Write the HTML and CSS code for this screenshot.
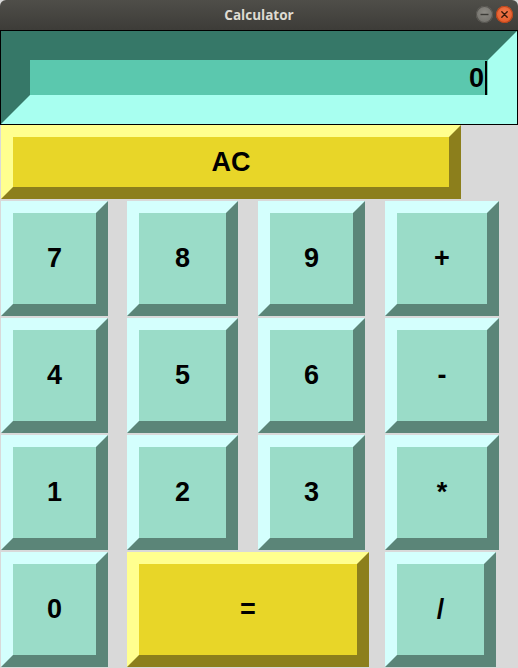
FILE: index.html
```html
<!DOCTYPE html>
<html>
<head>
<meta charset="utf-8">
<title>Calculator</title>
<link rel="stylesheet" href="styles.css">
</head>
<body>
<div class="window">
  <div class="titlebar">
    <span class="title">Calculator</span>
    <div class="controls">
      <span class="ctl ctl-min"><svg width="17" height="17" viewBox="0 0 17 17"><line x1="4.5" y1="8.5" x2="12.5" y2="8.5" stroke="#3c3b37" stroke-width="1.4"/></svg></span>
      <span class="ctl ctl-close"><svg width="17" height="17" viewBox="0 0 17 17"><path d="M5.8 5.8 L11.2 11.2 M11.2 5.8 L5.8 11.2" stroke="#3a1a0a" stroke-width="1.4" stroke-linecap="round"/></svg></span>
    </div>
  </div>
  <div class="display">
    <div class="entry"><span class="value">0</span><span class="cursor"></span></div>
  </div>
  <div class="keys">
    <div class="key yellow span3 w-ac">AC</div>
    <div class="key w0">7</div>
    <div class="key w1">8</div>
    <div class="key w2">9</div>
    <div class="key w3">+</div>
    <div class="key w0">4</div>
    <div class="key w1">5</div>
    <div class="key w2">6</div>
    <div class="key w3">-</div>
    <div class="key w0">1</div>
    <div class="key w1">2</div>
    <div class="key w2">3</div>
    <div class="key w3">*</div>
    <div class="key w0">0</div>
    <div class="key yellow span2 w-eq">=</div>
    <div class="key w-div">/</div>
  </div>
</div>
</body>
</html>
```
FILE: styles.css
```css
html, body {
  margin: 0;
  padding: 0;
  background: #d9d9d9;
}
.window {
  width: 518px;
  height: 668px;
  background: #d9d9d9;
  overflow: hidden;
}
.titlebar {
  position: relative;
  height: 30px;
  background: linear-gradient(#4f4e49, #3d3c38);
  border-radius: 6px 6px 0 0;
  display: flex;
  align-items: center;
  justify-content: center;
}
.title {
  font-family: "Open Sans", "DejaVu Sans", sans-serif;
  font-weight: 700;
  font-size: 13.5px;
  color: #dfdbd2;
}
.controls {
  position: absolute;
  right: 5px;
  top: 6px;
  display: flex;
  gap: 3px;
}
.ctl {
  width: 17px;
  height: 17px;
  border-radius: 50%;
  display: block;
}
.ctl svg { display: block; }
.ctl-min {
  background: radial-gradient(circle at 50% 40%, #8d8b85, #6b6a65);
  box-shadow: inset 0 0 0 1px #55534e;
}
.ctl-close {
  background: radial-gradient(circle at 50% 40%, #f27a4e, #e0511d);
  box-shadow: inset 0 0 0 1px #b8441a;
}
.display {
  height: 95px;
  box-sizing: border-box;
  border: 1px solid #000;
}
.entry {
  height: 93px;
  box-sizing: border-box;
  border-style: solid;
  border-width: 29px;
  border-color: #367868 #a8fff0 #a8fff0 #367868;
  background: #5bc8ae;
  display: flex;
  justify-content: flex-end;
  align-items: center;
}
.value {
  font-family: "Liberation Sans", Arial, sans-serif;
  font-weight: 700;
  font-size: 27px;
  line-height: 27px;
  color: #000;
  margin-top: 1px;
}
.cursor {
  width: 2px;
  height: 34px;
  background: #000;
  margin-left: 1px;
  margin-right: 1px;
}
.keys {
  display: grid;
  grid-template-columns: 126px 131px 127px 1fr;
  grid-template-rows: 74px 115px 115px 115px 115px;
  row-gap: 2px;
  padding-left: 1px;
}
.key {
  box-sizing: border-box;
  border-style: solid;
  border-width: 12px;
  border-color: #d4fffd #5b8578 #5b8578 #d4fffd;
  background: #9adcc8;
  display: flex;
  align-items: center;
  justify-content: center;
  font-family: "Liberation Sans", Arial, sans-serif;
  font-weight: 700;
  font-size: 27px;
  color: #000;
  justify-self: start;
}
.yellow {
  border-color: #ffff8f #8c7f1c #8c7f1c #ffff8f;
  background: #e8d628;
}
.span3 { grid-column: 1 / span 3; }
.span2 { grid-column: span 2; }
.w-ac { width: 460px; }
.w0 { width: 107px; grid-column: 1; }
.w1 { width: 111px; }
.w2 { width: 107px; }
.w3 { width: 114px; }
.w-eq { width: 242px; }
.w-div { width: 111px; }
```
